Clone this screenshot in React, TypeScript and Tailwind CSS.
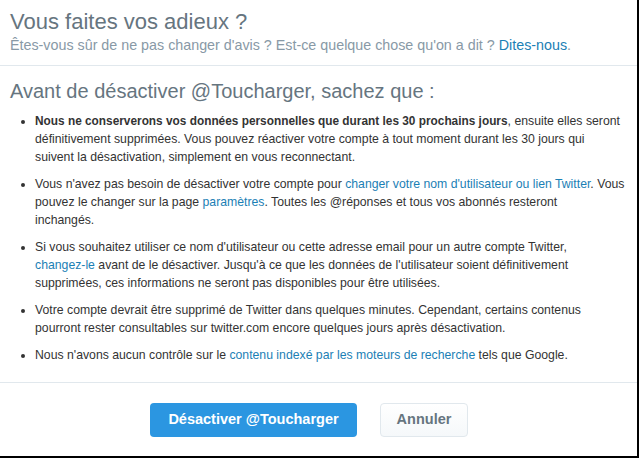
import React from "react";

const A = ({ children }: { children: React.ReactNode }) => (
  <a className="text-[#1b80b5]">{children}</a>
);

export default function App() {
  return (
    <div
      className="w-[639px] h-[458px] bg-white border-r-2 border-b-2 border-black overflow-hidden flex flex-col text-[#333]"
      style={{ fontFamily: '"Liberation Sans", Arial, sans-serif' }}
    >
      <div className="px-[10px] pt-[9px] pb-[11px] border-b border-[#e1e8ed]">
        <h1 className="text-[22px] leading-[26px] text-[#66757f]">Vous faites vos adieux ?</h1>
        <p className="text-[14.3px] leading-[18px] text-[#8899a6] mt-[1px]">
          Êtes-vous sûr de ne pas changer d'avis ? Est-ce quelque chose qu'on a dit ?{" "}
          <A>Dites-nous</A>.
        </p>
      </div>
      <div className="pl-[10px] pr-[4px] pt-[12px] border-b border-[#e1e8ed] h-[317px]">
        <h2 className="text-[20px] leading-[26px] text-[#66757f]">
          Avant de désactiver @Toucharger, sachez que :
        </h2>
        <ul className="mt-[8px] pl-[25px] pr-0 list-disc text-[12.25px] leading-[18px] text-[#333] flex flex-col gap-[9px] whitespace-nowrap">
          <li>
            <b className="text-[11.85px]">Nous ne conserverons vos données personnelles que durant les 30 prochains jours</b>, ensuite elles
            seront
            <br />
            définitivement supprimées. Vous pouvez réactiver votre compte à tout moment durant les 30 jours qui
            <br />
            suivent la désactivation, simplement en vous reconnectant.
          </li>
          <li>
            Vous n'avez pas besoin de désactiver votre compte pour{" "}
            <A>changer votre nom d'utilisateur ou lien Twitter</A>. Vous
            <br />
            pouvez le changer sur la page <A>paramètres</A>. Toutes les @réponses et tous vos abonnés resteront
            <br />
            inchangés.
          </li>
          <li>
            Si vous souhaitez utiliser ce nom d'utilisateur ou cette adresse email pour un autre compte Twitter,
            <br />
            <A>changez-le</A> avant de le désactiver. Jusqu'à ce que les données de l'utilisateur soient
            définitivement
            <br />
            supprimées, ces informations ne seront pas disponibles pour être utilisées.
          </li>
          <li>
            Votre compte devrait être supprimé de Twitter dans quelques minutes. Cependant, certains contenus
            <br />
            pourront rester consultables sur twitter.com encore quelques jours après désactivation.
          </li>
          <li>
            Nous n'avons aucun contrôle sur le <A>contenu indexé par les moteurs de recherche</A> tels que Google.
          </li>
        </ul>
      </div>
      <div className="flex justify-center gap-[23px] pt-[20px] pr-[19px]">
        <button className="w-[207px] h-[34px] rounded-[4px] bg-[#2b96e1] text-white font-bold text-[14.5px]">
          Désactiver @Toucharger
        </button>
        <button className="w-[88px] h-[34px] rounded-[4px] border border-[#e1e8ed] bg-gradient-to-b from-white to-[#f5f8fa] text-[#66757f] font-bold text-[14.5px]">
          Annuler
        </button>
      </div>
    </div>
  );
}
